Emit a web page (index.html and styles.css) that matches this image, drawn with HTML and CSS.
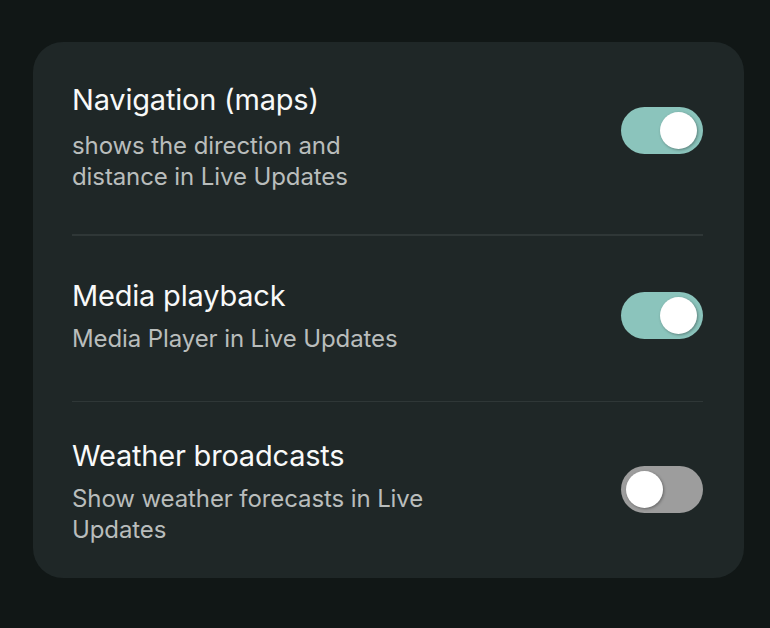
FILE: index.html
```html
<!DOCTYPE html>
<html>
<head>
<meta charset="utf-8">
<link rel="stylesheet" href="styles.css">
</head>
<body>
<div class="card">
  <div class="row row-first">
    <div class="text">
      <div class="title">Navigation (maps)</div>
      <div class="sub sub-first">shows the direction and<br>distance in Live Updates</div>
    </div>
    <div class="toggle on toggle-raised"><span class="thumb"></span></div>
  </div>
  <div class="divider"></div>
  <div class="row row-mid">
    <div class="text">
      <div class="title">Media playback</div>
      <div class="sub">Media Player in Live Updates</div>
    </div>
    <div class="toggle on"><span class="thumb"></span></div>
  </div>
  <div class="divider"></div>
  <div class="row row-last">
    <div class="text">
      <div class="title">Weather broadcasts</div>
      <div class="sub">Show weather forecasts in Live<br>Updates</div>
    </div>
    <div class="toggle off toggle-lifted"><span class="thumb"></span></div>
  </div>
</div>
</body>
</html>
```
FILE: styles.css
```css
html, body {
  margin: 0;
  padding: 0;
  background: #111716;
  height: 100%;
}
body {
  font-family: Inter, "Noto Sans", sans-serif;
  padding: 42px 26px 0 33px;
  box-sizing: border-box;
}
.card {
  width: 711px;
  height: 536px;
  box-sizing: border-box;
  background: #1f2727;
  border-radius: 30px;
  padding: 0 41px 0 39px;
  display: flex;
  flex-direction: column;
}
.row {
  display: flex;
  align-items: center;
  justify-content: space-between;
}
.row-first { padding: 40px 0 42px; }
.row-mid { padding: 42px 0 47px; }
.row-last { padding: 36px 0 33px; }
.title {
  color: #f8f9f9;
  font-size: 29px;
  line-height: 36px;
  letter-spacing: -0.2px;
}
.sub {
  color: #b9bdbc;
  font-size: 24px;
  line-height: 31px;
  margin-top: 9px;
  letter-spacing: -0.1px;
}
.sub-first { margin-top: 12px; }
.divider {
  height: 2px;
  background: #2f3737;
}
.toggle {
  width: 82px;
  height: 47px;
  border-radius: 24px;
  position: relative;
  flex: none;
}
.toggle-raised { margin-bottom: 14px; }
.toggle-lifted { margin-bottom: 5px; }
.toggle.on { background: #8bc4bc; }
.toggle.off { background: #9d9d9d; }
.thumb {
  position: absolute;
  top: 5px;
  width: 37px;
  height: 37px;
  border-radius: 50%;
  background: #ffffff;
  box-shadow: 1px 1px 3px rgba(0,0,0,0.35);
}
.toggle.on .thumb { right: 6px; }
.toggle.off .thumb { left: 5px; }
```
